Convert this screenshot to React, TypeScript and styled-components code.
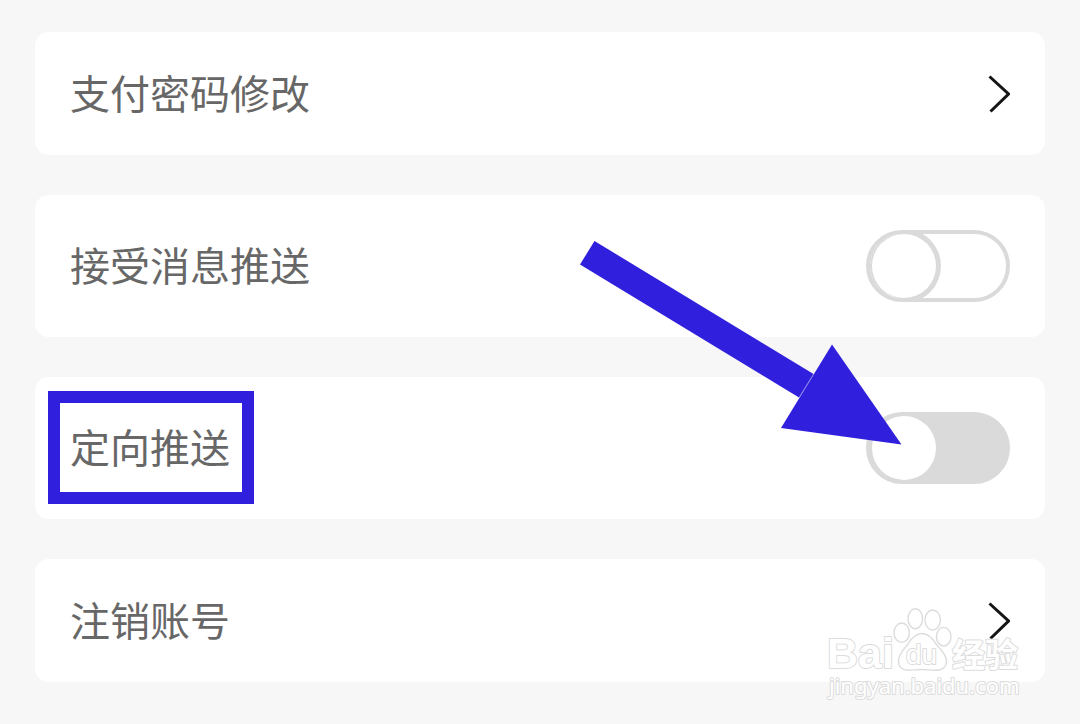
import React from "react";
import styled, { createGlobalStyle } from "styled-components";

const GlobalStyle = createGlobalStyle`
  *, *::before, *::after { box-sizing: border-box; }
  body {
    margin: 0;
    background: #f7f7f7;
    color: #676767;
    font-family: "Noto Sans CJK SC", "Noto Sans", sans-serif;
  }
`;

const Page = styled.main`
  position: relative;
  min-height: 100vh;
  padding: 32px 35px 42px;
  display: flex;
  flex-direction: column;
  gap: 40px;
`;

const Card = styled.section`
  position: relative;
  background: #fff;
  border-radius: 14px;
`;

const NavRow = styled.button`
  display: flex;
  align-items: center;
  justify-content: space-between;
  width: 100%;
  padding: 32px 35px 31px;
  border: 0;
  border-radius: 14px;
  background: transparent;
  color: inherit;
  font: inherit;
  text-align: left;
  cursor: pointer;
`;

const SwitchRow = styled.div`
  display: flex;
  align-items: center;
  justify-content: space-between;
  padding: 35px;
`;

const RowText = styled.span`
  padding-bottom: 4px;
  font-size: 40px;
  line-height: 56px;
`;

const RowLabel = styled.label<{ $marked?: boolean }>`
  position: relative;
  padding-bottom: 4px;
  font-size: 40px;
  line-height: 56px;

  &::after {
    content: "";
    display: ${({ $marked }) => ($marked ? "block" : "none")};
    position: absolute;
    inset: -27px -24px -26px -22px;
    border: 12px solid #301fdd;
    pointer-events: none;
  }
`;

const Switch = styled.input<{ $filled?: boolean }>`
  appearance: none;
  flex: none;
  width: 144px;
  height: 72px;
  margin: 0;
  border: 4px solid #dadada;
  border-radius: 36px;
  background: ${({ $filled }) => ($filled ? "#dadada" : "#fff")};
  overflow: hidden;
  cursor: pointer;

  &::before {
    content: "";
    display: block;
    width: 64px;
    height: 64px;
    margin-left: 2px;
    border-radius: 50%;
    background: #fff;
    box-shadow: 0 0 0 5px #dadada;
  }

  &:checked::before {
    margin-left: 70px;
  }
`;

const Chevron = styled.svg`
  flex: none;
  width: 22px;
  height: 38px;
`;

const Arrow = styled.svg`
  position: absolute;
  top: -136px;
  right: 143px;
  width: 322px;
  height: 204px;
  pointer-events: none;
`;

const Watermark = styled.svg`
  position: absolute;
  right: 50px;
  bottom: 19px;
  width: 205px;
  height: 105px;
  pointer-events: none;
`;

const ChevronRight = () => (
  <Chevron viewBox="0 0 22 38" fill="none" aria-hidden="true">
    <path d="M1.500 1.500 20.500 19 2.500 36.500" stroke="#151515" strokeWidth="3" />
  </Chevron>
);

const BaiduWatermark = () => (
  <Watermark viewBox="0 0 205 105" role="img" aria-label="Baidu 经验">
    <g fill="#fff" stroke="#dcdcdc" strokeWidth="1.4">
      <ellipse cx="76.7" cy="32.7" rx="7.7" ry="9.7" />
      <ellipse cx="90.3" cy="18.7" rx="7.3" ry="10" />
      <ellipse cx="107.7" cy="20" rx="7.7" ry="10" />
      <ellipse cx="118.7" cy="36.7" rx="7.3" ry="9.3" />
      <path d="M97 33.500C90 33.500 86 39 83 44C79 49 73.500 54 73.500 61C73.500 67 77.500 70.200 83 70.200C88 70.200 92 69.500 97 69.500C102 69.500 106 70.200 111 70.200C117 70.200 121.500 67 121.500 61C121.500 54 115 49 111 44C108 39 104 33.500 97 33.500Z" />
    </g>
    <g fill="#fff" stroke="#dcdcdc" strokeWidth="2" strokeLinejoin="round" paintOrder="stroke">
      <text x="2" y="68" fontFamily="Liberation Sans, sans-serif" fontWeight="700" fontSize="43">Bai</text>
      <text x="81" y="64" fontFamily="Liberation Sans, sans-serif" fontWeight="400" fontSize="28">du</text>
      <text x="127" y="67" fontFamily="Noto Sans CJK SC, sans-serif" fontWeight="700" fontSize="33">经验</text>
      <text x="4" y="94" fontFamily="Noto Sans, sans-serif" fontSize="22">jingyan.baidu.com</text>
    </g>
  </Watermark>
);

export default function App() {
  return (
    <>
      <GlobalStyle />
      <Page>
        <Card>
          <NavRow type="button">
            <RowText>支付密码修改</RowText>
            <ChevronRight />
          </NavRow>
        </Card>
        <Card>
          <SwitchRow>
            <RowLabel htmlFor="message-push">接受消息推送</RowLabel>
            <Switch id="message-push" type="checkbox" role="switch" />
          </SwitchRow>
        </Card>
        <Card>
          <SwitchRow>
            <RowLabel htmlFor="targeted-push" $marked>定向推送</RowLabel>
            <Switch id="targeted-push" type="checkbox" role="switch" $filled />
          </SwitchRow>
          <Arrow viewBox="0 0 322 204" aria-hidden="true">
            <path d="M14.500 0 233.500 133 219 156.500 0 23.500Z" fill="#301fdd" />
            <path d="M252 103.500 321.500 203.500 201 187Z" fill="#301fdd" />
            <path d="M233.500 133 219 156.500" stroke="#7a70e8" strokeWidth="0.6" />
          </Arrow>
        </Card>
        <Card>
          <NavRow type="button">
            <RowText>注销账号</RowText>
            <ChevronRight />
          </NavRow>
        </Card>
        <BaiduWatermark />
      </Page>
    </>
  );
}
